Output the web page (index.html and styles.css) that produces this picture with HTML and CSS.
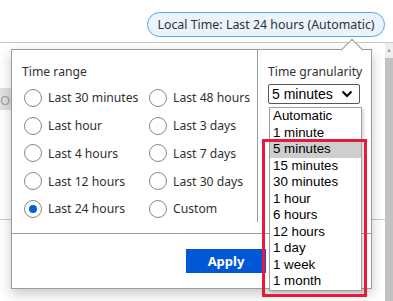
FILE: index.html
```html
<!DOCTYPE html>
<html>
<head>
  <meta charset="UTF-8">
  <title>Time range</title>
  <link rel="stylesheet" href="styles.css">
</head>
<body>
  <div class="topbar">
    <button class="time-pill">Local Time: Last 24 hours (Automatic)</button>
  </div>

  <div class="page">
    <div class="page-content">
      <div class="toolbar">
        <span class="tool-button">Ori</span>
      </div>
      <div class="table-line"></div>
    </div>
    <div class="scrollbar">
      <span class="scroll-arrow">&#9650;</span>
      <span class="scroll-thumb"></span>
    </div>

    <div class="popup">
      <span class="popup-arrow"></span>
      <div class="popup-body">
        <div class="range-col">
          <div class="section-title">Time range</div>
          <div class="radio-grid">
            <label class="radio"><span class="radio-dot"></span>Last 30 minutes</label>
            <label class="radio"><span class="radio-dot"></span>Last 48 hours</label>
            <label class="radio"><span class="radio-dot"></span>Last hour</label>
            <label class="radio"><span class="radio-dot"></span>Last 3 days</label>
            <label class="radio"><span class="radio-dot"></span>Last 4 hours</label>
            <label class="radio"><span class="radio-dot"></span>Last 7 days</label>
            <label class="radio"><span class="radio-dot"></span>Last 12 hours</label>
            <label class="radio"><span class="radio-dot"></span>Last 30 days</label>
            <label class="radio"><span class="radio-dot checked"></span>Last 24 hours</label>
            <label class="radio"><span class="radio-dot"></span>Custom</label>
          </div>
        </div>
        <div class="grain-col">
          <div class="section-title">Time granularity</div>
          <div class="select-box">
            <span>5 minutes</span>
            <svg class="chevron" width="12" height="8" viewBox="0 0 12 8">
              <path d="M1.5 1.5 L6 6 L10.5 1.5" fill="none" stroke="#000" stroke-width="2"/>
            </svg>
          </div>
        </div>
      </div>
      <div class="popup-footer">
        <button class="apply-button">Apply</button>
      </div>

      <ul class="option-list">
        <li>Automatic</li>
        <li>1 minute</li>
        <li class="selected">5 minutes</li>
        <li>15 minutes</li>
        <li>30 minutes</li>
        <li>1 hour</li>
        <li>6 hours</li>
        <li>12 hours</li>
        <li>1 day</li>
        <li>1 week</li>
        <li>1 month</li>
      </ul>
      <div class="highlight-box"></div>
    </div>
  </div>
</body>
</html>
```

FILE: styles.css
```css
body {
  margin: 0;
  width: 393px;
  height: 301px;
  overflow: hidden;
  background-color: #ffffff;
  font-family: "Noto Sans", "Open Sans", sans-serif;
  font-size: 12.2px;
  color: #323130;
}

.topbar {
  height: 42px;
  display: flex;
  justify-content: flex-end;
  align-items: flex-start;
  padding: 12px 8px 0 0;
  box-sizing: border-box;
}

.time-pill {
  height: 25px;
  width: 238px;
  padding: 0;
  background-color: #ebf4fd;
  border: 1px solid #5aa6e6;
  border-radius: 13px;
  font-family: inherit;
  font-size: 12.4px;
  color: #323130;
}

.page {
  position: relative;
  height: 259px;
  border-top: 1px solid #c8c8c8;
  display: flex;
}

.page-content {
  flex: 1;
  padding-top: 45px;
}

.toolbar {
  height: 22px;
  display: flex;
}

.tool-button {
  background-color: #e1e1e1;
  color: #a0a0a0;
  padding-top: 3px;
  width: 60px;
  font-size: 13px;
}

.table-line {
  margin-top: 109px;
  border-top: 1px solid #c8c8c8;
}

.scrollbar {
  width: 8px;
  display: flex;
  flex-direction: column;
  align-items: center;
  background-color: #eeeeee;
}

.scroll-arrow {
  font-size: 6px;
  color: #a0a0a0;
  height: 12px;
  padding-top: 3px;
}

.scroll-thumb {
  flex: 1;
  width: 8px;
  background-color: #c2c2c2;
}

/* popup */
.popup {
  position: absolute;
  left: 11px;
  top: 6px;
  width: 359px;
  height: 238px;
  background-color: #ffffff;
  border: 1px solid #9a9a9a;
  box-shadow: 0 5px 12px rgba(0, 0, 0, 0.22);
  display: flex;
  flex-direction: column;
}

.popup-arrow {
  position: absolute;
  left: 332px;
  top: -8px;
  width: 15px;
  height: 15px;
  background-color: #ffffff;
  border-top: 1px solid #9a9a9a;
  border-left: 1px solid #9a9a9a;
  transform: rotate(45deg);
}

.popup-body {
  position: relative;
  height: 183px;
  display: flex;
  border-bottom: 1px solid #9a9a9a;
}

.range-col {
  width: 235px;
  padding: 13px 0 0 10px;
  border-right: 1px solid #9a9a9a;
  margin-bottom: 11px;
}

.section-title {
  line-height: 18px;
  height: 18px;
}

.radio-grid {
  margin-top: 3px;
  display: grid;
  grid-template-columns: 125px 110px;
  grid-auto-rows: 27.75px;
}

.radio {
  display: flex;
  align-items: center;
  gap: 6px;
  padding-left: 2px;
  white-space: nowrap;
}

.radio-dot {
  width: 16px;
  height: 16px;
  border: 1px solid #8a8886;
  border-radius: 50%;
  display: flex;
  align-items: center;
  justify-content: center;
  flex-shrink: 0;
}

.radio-dot.checked::after {
  content: "";
  width: 8px;
  height: 8px;
  border-radius: 50%;
  background-color: #0062d6;
}

.grain-col {
  flex: 1;
  padding: 13px 0 0 10px;
}

.select-box {
  margin-top: 3px;
  width: 92px;
  height: 20px;
  box-sizing: border-box;
  border: 1px solid #555555;
  border-radius: 2px;
  display: flex;
  align-items: center;
  justify-content: space-between;
  padding: 0 6px 0 3px;
  font-family: "Liberation Sans", Arial, sans-serif;
  font-size: 14px;
  color: #000000;
}

.popup-footer {
  flex: 1;
  display: flex;
  align-items: flex-start;
  padding: 15px 0 0 174px;
}

.apply-button {
  width: 80px;
  height: 24px;
  border: none;
  background-color: #0058d6;
  color: #ffffff;
  font-family: inherit;
  font-size: 13px;
  font-weight: bold;
}

/* open dropdown */
.option-list {
  position: absolute;
  left: 257px;
  top: 57px;
  width: 91px;
  margin: 0;
  padding: 0;
  list-style: none;
  background-color: #ffffff;
  border: 1px solid #a0a0a0;
  box-shadow: 2px 2px 3px rgba(0, 0, 0, 0.15);
  font-family: "Liberation Sans", Arial, sans-serif;
  font-size: 13.33px;
  color: #000000;
}

.option-list li {
  height: 16.5px;
  line-height: 16.5px;
  padding-left: 3px;
}

.option-list li.selected {
  background-color: #cecece;
}

.highlight-box {
  position: absolute;
  left: 250px;
  top: 89px;
  width: 99px;
  height: 152px;
  border: 3px solid #e8193c;
}
```
